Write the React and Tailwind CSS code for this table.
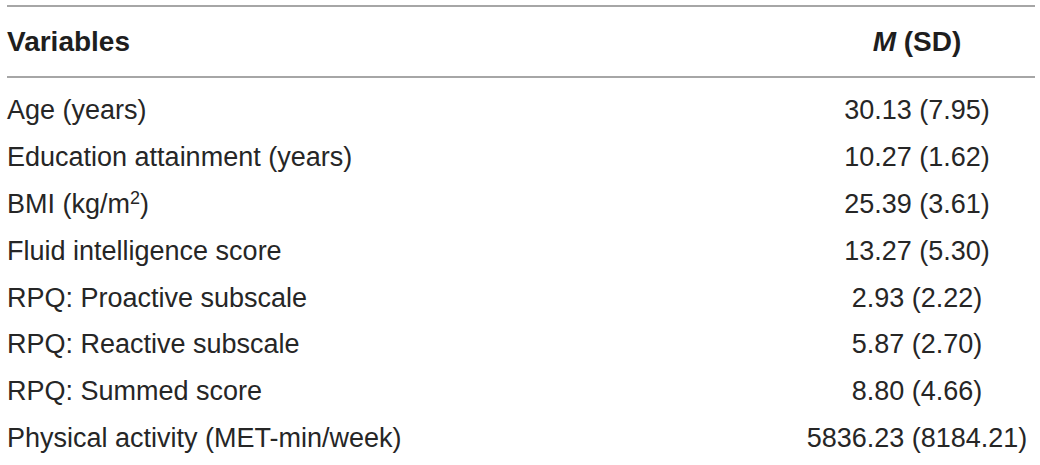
import React from "react";

const rows = [
  ["Age (years)", "30.13 (7.95)"],
  ["Education attainment (years)", "10.27 (1.62)"],
  ["BMI", "25.39 (3.61)"],
  ["Fluid intelligence score", "13.27 (5.30)"],
  ["RPQ: Proactive subscale", "2.93 (2.22)"],
  ["RPQ: Reactive subscale", "5.87 (2.70)"],
  ["RPQ: Summed score", "8.80 (4.66)"],
  ["Physical activity (MET-min/week)", "5836.23 (8184.21)"],
];

export default function App() {
  return (
    <div className="w-[1040px] h-[465px] overflow-hidden bg-white text-[#262626] font-['Liberation_Sans','Helvetica_Neue',Arial,sans-serif]">
      <div className="ml-[7px] w-[1028px] pt-[5px]">
        <div className="h-[2px] bg-[#a6a6a6]" />
        <div className="flex h-[69px] items-center text-[28px] font-bold text-[#1e1e1e]">
          <div className="flex-1">Variables</div>
          <div className="w-[236px] text-center">
            <span className="italic">M</span> (SD)
          </div>
        </div>
        <div className="h-[2px] bg-[#a6a6a6]" />
        <div className="pt-[9px]">
          {rows.map(([label, value], i) => (
            <div key={i} className="flex h-[46.9px] items-center text-[27px] leading-[46.9px]">
              <div className="flex-1">
                {label === "BMI" ? (
                  <>
                    BMI (kg/m<sup className="text-[18px]">2</sup>)
                  </>
                ) : (
                  label
                )}
              </div>
              <div className="w-[236px] text-center">{value}</div>
            </div>
          ))}
        </div>
      </div>
    </div>
  );
}
